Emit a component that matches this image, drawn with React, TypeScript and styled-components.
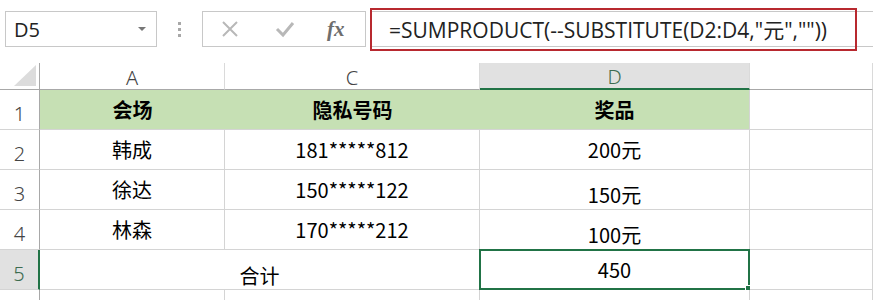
import React from "react"
import styled, {createGlobalStyle} from "styled-components"

const GlobalStyle = createGlobalStyle`
  html, body {
    margin: 0;
    padding: 0;
    background: #ffffff;
  }
  body {
    font-family: "Noto Sans CJK SC", "Noto Sans", sans-serif;
    color: #000;
  }
`

const Page = styled.div`
  width: 873px;
  height: 300px;
  overflow: hidden;
  display: flex;
  flex-direction: column;
`

const FormulaBar = styled.div`
  display: flex;
  align-items: center;
  height: 36px;
  margin-top: 11px;
  padding-left: 5px;
`

const NameBox = styled.div`
  width: 152px;
  height: 36px;
  box-sizing: border-box;
  border: 1px solid #c8c8c8;
  display: flex;
  align-items: center;
  justify-content: space-between;
  padding: 0 10px 0 8px;
  font-family: "Open Sans", "Noto Sans", sans-serif;
  font-size: 20px;
  color: #222;
`

const DropArrow = styled.span`
  width: 0;
  height: 0;
  border-left: 4px solid transparent;
  border-right: 4px solid transparent;
  border-top: 4px solid #777;
`

const Grip = styled.div`
  width: 45px;
  display: flex;
  flex-direction: column;
  align-items: center;
  gap: 3px;
  span {
    width: 3px;
    height: 3px;
    background: #a8a8a8;
  }
`

const ButtonBox = styled.div`
  width: 164px;
  height: 36px;
  box-sizing: border-box;
  border: 1px solid #c8c8c8;
  display: flex;
  align-items: center;
  gap: 36px;
  padding-left: 18px;
  margin-right: 4px;
`

const Fx = styled.span`
  font-family: "Liberation Serif", "DejaVu Serif", serif;
  font-style: italic;
  font-weight: bold;
  font-size: 21px;
  color: #6e6e6e;
  margin-left: -4px;
`

const FormulaWrap = styled.div`
  flex: 1;
  height: 36px;
  box-sizing: border-box;
  border-top: 1px solid #c8c8c8;
  border-bottom: 1px solid #c8c8c8;
  display: flex;
  align-items: center;
`

const FormulaHighlight = styled.div`
  width: 487px;
  height: 43px;
  box-sizing: border-box;
  border: 2px solid #b8292f;
  display: flex;
  align-items: center;
  padding-left: 17px;
  font-family: "Open Sans", "Noto Sans CJK SC", sans-serif;
  font-size: 21px;
  color: #222;
  white-space: nowrap;
`

const Sheet = styled.div`
  margin-top: 16px;
  display: grid;
  grid-template-columns: 40px 185px 255px 270px 1fr;
  grid-template-rows: 27px repeat(5, 40px) 20px;
`

const Corner = styled.div`
  box-sizing: border-box;
  border-right: 1px solid #a8a8a8;
  border-bottom: 1px solid #a8a8a8;
  display: flex;
  align-items: flex-end;
  justify-content: flex-end;
  padding: 0 3px 3px 0;
`

const ColHead = styled.div<{$selected?: boolean}>`
  box-sizing: border-box;
  background: ${props => props.$selected ? "#e1e1e1" : "#ffffff"};
  border-right: 1px solid #dadada;
  border-bottom: ${props => props.$selected ? "2px solid #217346" : "1px solid #a8a8a8"};
  display: flex;
  align-items: center;
  justify-content: center;
  font-family: "Noto Sans", sans-serif;
  font-weight: 300;
  font-size: 20px;
  color: ${props => props.$selected ? "#3d6b50" : "#444"};
  padding-top: 2px;
`

const RowHead = styled.div<{$selected?: boolean}>`
  box-sizing: border-box;
  background: ${props => props.$selected ? "#e1e1e1" : "#ffffff"};
  border-right: ${props => props.$selected ? "2px solid #217346" : "1px solid #a8a8a8"};
  border-bottom: 1px solid #d4d4d4;
  display: flex;
  align-items: flex-end;
  justify-content: center;
  padding-bottom: 2px;
  font-family: "Noto Sans", sans-serif;
  font-weight: 300;
  font-size: 20px;
  color: ${props => props.$selected ? "#3d6b50" : "#444"};
`

const Cell = styled.div<{$head?: boolean; $shift?: number; $span?: number; $last?: boolean}>`
  position: relative;
  box-sizing: border-box;
  grid-column: ${props => props.$span ? `span ${props.$span}` : "auto"};
  background: ${props => props.$head ? "#c6e0b4" : "#ffffff"};
  border-right: ${props => props.$head && !props.$last ? "none" : "1px solid #d4d4d4"};
  border-bottom: 1px solid #d4d4d4;
  display: flex;
  align-items: center;
  justify-content: center;
  padding-top: ${props => (props.$shift || 0) * 2}px;
  font-size: 20px;
  font-weight: ${props => props.$head ? 700 : 400};
  color: #000;
`

const Selection = styled.div`
  position: absolute;
  top: -1px;
  left: -1px;
  right: -1px;
  bottom: -1px;
  border: 2px solid #217346;
  pointer-events: none;
`

const FillHandle = styled.div`
  position: absolute;
  right: -4px;
  bottom: -4px;
  width: 6px;
  height: 6px;
  background: #217346;
  border: 1px solid #ffffff;
`

const rows = [
    {name: "韩成", phone: "181*****812", prize: "200元", shift: 0},
    {name: "徐达", phone: "150*****122", prize: "150元", shift: 5},
    {name: "林森", phone: "170*****212", prize: "100元", shift: 5},
]

const App = (): React.JSX.Element => {
    return (
        <Page>
            <GlobalStyle/>
            <FormulaBar>
                <NameBox>
                    D5
                    <DropArrow/>
                </NameBox>
                <Grip><span/><span/><span/></Grip>
                <ButtonBox>
                    <svg width="18" height="18" viewBox="0 0 18 18">
                        <path d="M2 2 L16 16 M16 2 L2 16" stroke="#b8b8b8" strokeWidth="2" fill="none"/>
                    </svg>
                    <svg width="20" height="18" viewBox="0 0 20 18">
                        <path d="M2 9 L8 15 L18 3" stroke="#b8b8b8" strokeWidth="3" fill="none"/>
                    </svg>
                    <Fx>fx</Fx>
                </ButtonBox>
                <FormulaWrap>
                    <FormulaHighlight>=SUMPRODUCT(--SUBSTITUTE(D2:D4,"元",""))</FormulaHighlight>
                </FormulaWrap>
            </FormulaBar>

            <Sheet>
                <Corner>
                    <svg width="22" height="21" viewBox="0 0 22 21">
                        <polygon points="22,0 22,21 0,21" fill="#dcdcdc"/>
                    </svg>
                </Corner>
                <ColHead>A</ColHead>
                <ColHead>C</ColHead>
                <ColHead $selected>D</ColHead>
                <ColHead/>

                <RowHead>1</RowHead>
                <Cell $head>会场</Cell>
                <Cell $head>隐私号码</Cell>
                <Cell $head $last>奖品</Cell>
                <Cell/>

                {rows.map((row, i) => (
                    <React.Fragment key={row.name}>
                        <RowHead>{i + 2}</RowHead>
                        <Cell>{row.name}</Cell>
                        <Cell>{row.phone}</Cell>
                        <Cell $shift={row.shift}>{row.prize}</Cell>
                        <Cell/>
                    </React.Fragment>
                ))}

                <RowHead $selected>5</RowHead>
                <Cell $span={2} $shift={6}>合计</Cell>
                <Cell>
                    450
                    <Selection/>
                    <FillHandle/>
                </Cell>
                <Cell/>

                <RowHead/>
                <Cell/>
                <Cell/>
                <Cell/>
                <Cell/>
            </Sheet>
        </Page>
    )
}

export default App
